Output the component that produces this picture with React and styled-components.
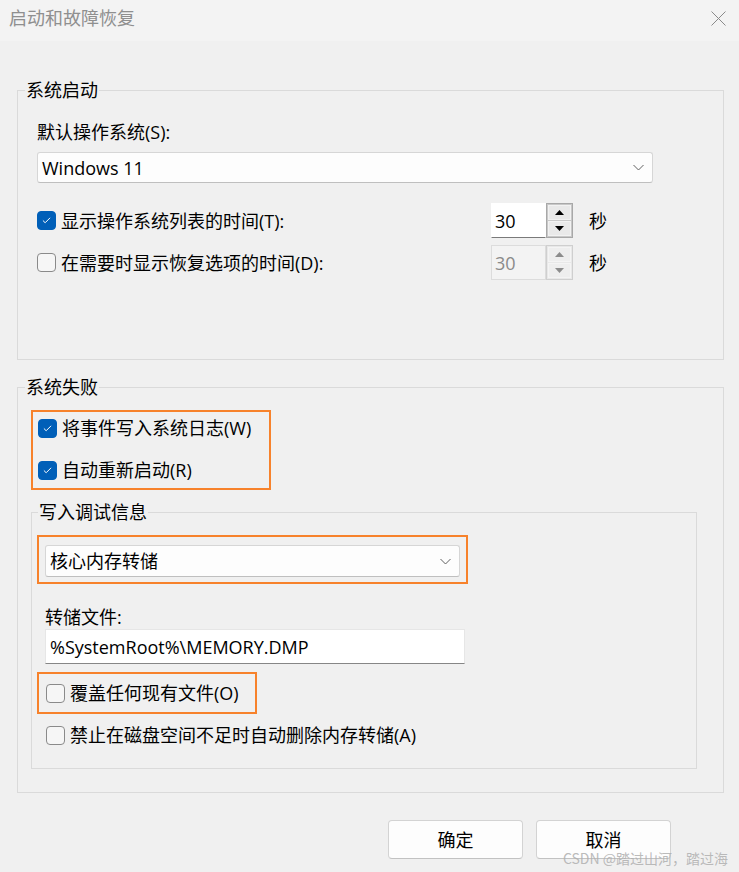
import React from 'react';
import styled, { createGlobalStyle } from 'styled-components';

const Global = createGlobalStyle`
  html, body { margin: 0; padding: 0; background: #f0f0f0; }
  body { font-family: "Open Sans", "Noto Sans CJK SC", sans-serif; }
`;

const Window = styled.div`
  position: relative;
  width: 739px;
  height: 872px;
  overflow: hidden;
  background: #f0f0f0;
  font-family: "Open Sans", "Noto Sans CJK SC", sans-serif;
  font-size: 18px;
  line-height: 24px;
  color: #000;
`;

const TitleBar = styled.div`
  height: 41px;
  box-sizing: border-box;
  background: #f3f3f3;
  display: flex;
  align-items: flex-start;
  justify-content: space-between;
  padding: 6px 13px 0 9px;
`;

const Title = styled.div`
  color: #8f8f8f;
  font-size: 18px;
  line-height: 24px;
`;

const Close = styled.svg`
  width: 15px;
  height: 15px;
  margin-top: 5px;
`;

const Content = styled.div`
  padding: 37px 15px 0 17px;
`;

const Group = styled.fieldset`
  margin: ${p => p.$mt || 0}px 0 0 0;
  padding: 0;
  border: 1px solid #dadada;
  min-width: 0;
  width: ${p => p.$w}px;
  box-sizing: border-box;
`;

const Legend = styled.legend`
  padding: 0 1px;
  margin-left: ${p => p.$ml}px;
  font-size: 18px;
  line-height: 24px;
  color: #000;
`;

const Body = styled.div`
  display: flex;
  flex-direction: column;
  align-items: flex-start;
  padding: ${p => p.$pad};
`;

const Label = styled.div`
  margin-top: ${p => p.$mt || 0}px;
  margin-left: ${p => p.$ml || 0}px;
  line-height: 24px;
`;

const Select = styled.div`
  margin-top: ${p => p.$mt || 0}px;
  width: ${p => p.$w}px;
  height: ${p => p.$h}px;
  box-sizing: border-box;
  background: #fdfdfd;
  border: 1px solid #d6d6d6;
  border-bottom-color: #bfbfbf;
  border-radius: 3px;
  display: flex;
  align-items: center;
  justify-content: space-between;
  padding: 0 8px 0 4px;
`;

const Chevron = styled.svg`
  width: 11px;
  height: 7px;
`;

const SpinRow = styled.div`
  margin-top: ${p => p.$mt}px;
  display: grid;
  grid-template-columns: 454px 82px auto;
  align-items: center;
  height: 35px;
`;

const Check = styled.label`
  display: flex;
  align-items: center;
  gap: 5px;
  height: ${p => p.$h || 30}px;
  margin-top: ${p => p.$mt || 0}px;
  margin-left: ${p => p.$ml || 0}px;
  white-space: nowrap;
`;

const Box = styled.span`
  width: 19px;
  height: 19px;
  box-sizing: border-box;
  border-radius: 4px;
  flex: none;
  display: flex;
  align-items: center;
  justify-content: center;
  background: ${p => (p.$on ? '#005fb8' : '#f6f6f6')};
  border: 1px solid ${p => (p.$on ? '#005fb8' : '#8a8a8a')};
`;

const Spin = styled.div`
  display: flex;
  width: 82px;
  height: 35px;
`;

const SpinInput = styled.div`
  width: 55px;
  box-sizing: border-box;
  padding-left: 3px;
  display: flex;
  align-items: center;
  background: ${p => (p.$disabled ? '#f3f3f3' : '#ffffff')};
  border: 1px solid ${p => (p.$disabled ? '#dcdcdc' : '#ffffff')};
  border-bottom-color: ${p => (p.$disabled ? '#dcdcdc' : '#7a7a7a')};
  color: ${p => (p.$disabled ? '#8a8a8a' : '#000')};
`;

const SpinButtons = styled.div`
  width: 27px;
  box-sizing: border-box;
  border: 1px solid ${p => (p.$disabled ? '#cfcfcf' : '#a8a8a8')};
  padding: 1px;
  display: flex;
  flex-direction: column;
  gap: 1px;
  background: ${p => (p.$disabled ? '#e8e8e8' : '#c8c8c8')};
`;

const SpinBtn = styled.div`
  flex: 1;
  display: flex;
  align-items: center;
  justify-content: center;
  background: ${p => (p.$disabled ? '#eeeeee' : '#e9e9e9')};
  border: 1px solid ${p => (p.$disabled ? '#f4f4f4' : '#f2f2f2')};
`;

const Arrow = styled.svg`
  width: 9px;
  height: 5px;
`;

const Unit = styled.span`
  padding-left: 16px;
`;

const Highlight = styled.div`
  margin-top: ${p => p.$mt || 0}px;
  width: ${p => p.$w}px;
  box-sizing: border-box;
  border: 2px solid #f7822b;
  padding: ${p => p.$pad};
  display: flex;
  flex-direction: column;
  gap: ${p => p.$gap || 0}px;
`;

const TextInput = styled.div`
  margin-top: ${p => p.$mt || 0}px;
  margin-left: ${p => p.$ml || 0}px;
  width: ${p => p.$w}px;
  height: 35px;
  box-sizing: border-box;
  background: #ffffff;
  border: 1px solid #e6e6e6;
  border-bottom-color: #868686;
  padding-left: 4px;
  display: flex;
  align-items: center;
`;

const Buttons = styled.div`
  display: flex;
  justify-content: flex-end;
  gap: 13px;
  margin-top: 27px;
  padding-right: 53px;
`;

const Button = styled.button`
  width: 135px;
  height: 39px;
  box-sizing: border-box;
  background: #fdfdfd;
  border: 1px solid #d3d3d3;
  border-bottom-color: #c2c2c2;
  border-radius: 4px;
  font-family: "Open Sans", "Noto Sans CJK SC", sans-serif;
  font-size: 18px;
  line-height: 20px;
  color: #000;
  padding: 0;
`;

const Watermark = styled.div`
  position: absolute;
  right: 11px;
  bottom: 6px;
  font-family: "Noto Sans CJK SC", sans-serif;
  font-size: 14px;
  line-height: 16px;
  color: rgba(175, 175, 175, 0.85);
`;

const CheckMark = () => (
  <svg width="19" height="19" viewBox="0 0 19 19">
    <path d="M5.5 9.5 L8 12 L13.5 6.5" fill="none" stroke="#fff" strokeWidth="1.1" />
  </svg>
);

const CheckBox = ({ on, children, ...rest }) => (
  <Check {...rest}>
    <Box $on={on}>{on && <CheckMark />}</Box>
    <span>{children}</span>
  </Check>
);

const ChevronIcon = () => (
  <Chevron viewBox="0 0 11 7">
    <path d="M0.5 1 L5.5 6 L10.5 1" fill="none" stroke="#606060" strokeWidth="1" />
  </Chevron>
);

const SpinBox = ({ value, disabled }) => {
  const c = disabled ? '#8c8c8c' : '#000';
  return (
    <Spin>
      <SpinInput $disabled={disabled}>{value}</SpinInput>
      <SpinButtons $disabled={disabled}>
        <SpinBtn $disabled={disabled}>
          <Arrow viewBox="0 0 9 5"><polygon points="4.5,0 9,5 0,5" fill={c} /></Arrow>
        </SpinBtn>
        <SpinBtn $disabled={disabled}>
          <Arrow viewBox="0 0 9 5"><polygon points="0,0 9,0 4.5,5" fill={c} /></Arrow>
        </SpinBtn>
      </SpinButtons>
    </Spin>
  );
};

export default function App() {
  return (
    <Window>
      <Global />
      <TitleBar>
        <Title>启动和故障恢复</Title>
        <Close viewBox="0 0 15 15">
          <path d="M0.5 0.5 L14.5 14.5 M14.5 0.5 L0.5 14.5" stroke="#8a8a8a" strokeWidth="1" />
        </Close>
      </TitleBar>
      <Content>
        <Group $w={707}>
          <Legend $ml={7}>系统启动</Legend>
          <Body $pad="0 0 79px 19px">
            <Label $mt={18}>默认操作系统(S):</Label>
            <Select $mt={8} $w={616} $h={31}>
              <span>Windows 11</span>
              <ChevronIcon />
            </Select>
            <SpinRow $mt={20}>
              <CheckBox on>显示操作系统列表的时间(T):</CheckBox>
              <SpinBox value="30" />
              <Unit>秒</Unit>
            </SpinRow>
            <SpinRow $mt={7}>
              <CheckBox>在需要时显示恢复选项的时间(D):</CheckBox>
              <SpinBox value="30" disabled />
              <Unit>秒</Unit>
            </SpinRow>
          </Body>
        </Group>

        <Group $w={707} $mt={15}>
          <Legend $ml={7}>系统失败</Legend>
          <Body $pad="11px 0 23px 13px">
            <Highlight $w={240} $pad="1px 0 3px 5px" $gap={12}>
              <CheckBox on>将事件写入系统日志(W)</CheckBox>
              <CheckBox on>自动重新启动(R)</CheckBox>
            </Highlight>

            <Group $w={666} $mt={10}>
              <Legend $ml={6}>写入调试信息</Legend>
              <Body $pad="0 0 18px 5px">
                <Highlight $mt={11} $w={431} $pad="8px 5px 5px 6px">
                  <Select $w={415} $h={32}>
                    <span>核心内存转储</span>
                    <ChevronIcon />
                  </Select>
                </Highlight>
                <Label $mt={21} $ml={8}>转储文件:</Label>
                <TextInput $ml={8} $w={420}>%SystemRoot%\MEMORY.DMP</TextInput>
                <Highlight $mt={8} $w={220} $pad="4px 0 4px 7px">
                  <CheckBox>覆盖任何现有文件(O)</CheckBox>
                </Highlight>
                <CheckBox $mt={6} $ml={9}>禁止在磁盘空间不足时自动删除内存转储(A)</CheckBox>
              </Body>
            </Group>
          </Body>
        </Group>

        <Buttons>
          <Button>确定</Button>
          <Button>取消</Button>
        </Buttons>
      </Content>
      <Watermark>CSDN @踏过山河，踏过海</Watermark>
    </Window>
  );
}
